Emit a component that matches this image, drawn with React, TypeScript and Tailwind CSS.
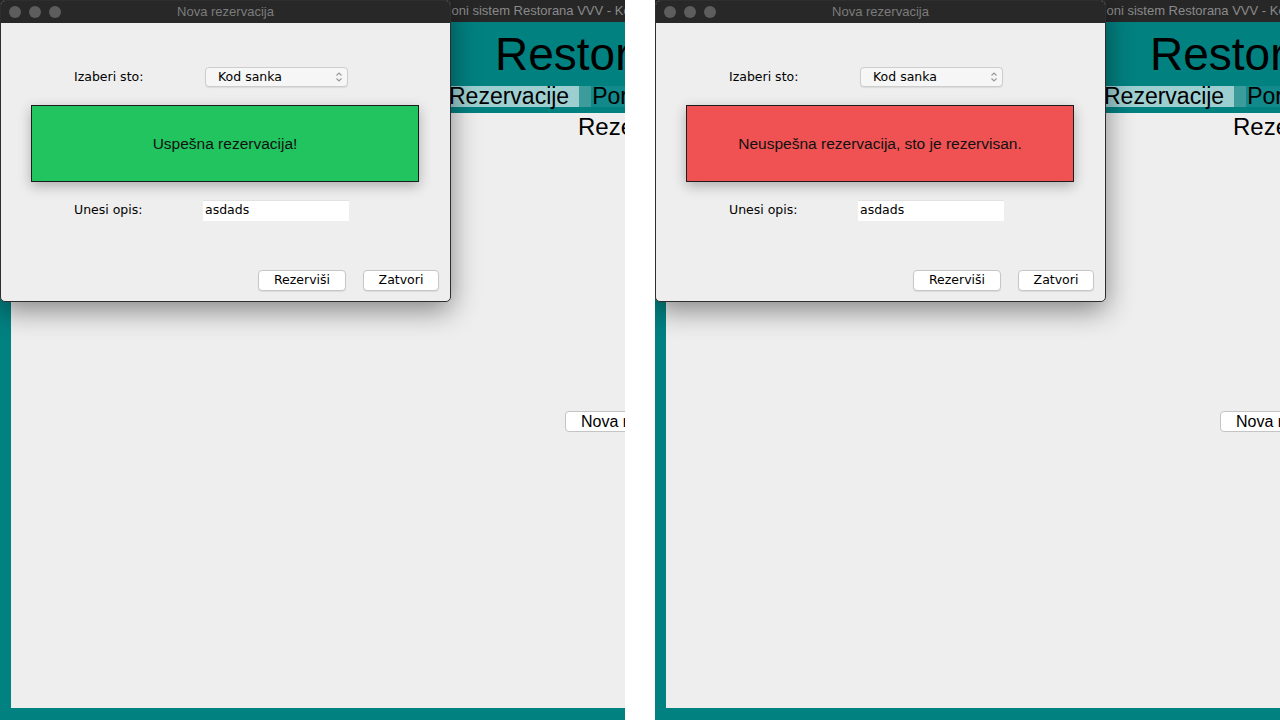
import React from "react";

const uiFont = { fontFamily: '"DejaVu Sans", "Liberation Sans", sans-serif' };
const msgFont = { fontFamily: '"Liberation Sans", Arial, sans-serif' };

function TrafficLights() {
  return (
    <div className="flex items-center gap-[8px] pl-[8px]">
      <span className="h-[12px] w-[12px] rounded-full bg-[#5d5d5d]" />
      <span className="h-[12px] w-[12px] rounded-full bg-[#5d5d5d]" />
      <span className="h-[12px] w-[12px] rounded-full bg-[#5d5d5d]" />
    </div>
  );
}

function Chevrons() {
  return (
    <svg width="8" height="12" viewBox="0 0 8 12" fill="none" stroke="#9a9a9a" strokeWidth="1.2">
      <path d="M1.5 4.5 L4 2 L6.5 4.5" />
      <path d="M1.5 7.5 L4 10 L6.5 7.5" />
    </svg>
  );
}

function MainWindow() {
  return (
    <div className="flex h-full w-[1000px] flex-col">
      <div
        className="flex h-[22px] items-center whitespace-nowrap bg-[#272727] pl-[398px] text-[13px] text-[#8a8a8a]"
        style={msgFont}
      >
        Informacioni sistem Restorana VVV - Kod
      </div>
      <div className="flex flex-1 flex-col bg-[#028181] pb-[12px] pl-[11px]">
        <div
          className="flex h-[64px] items-center whitespace-nowrap pl-[484px] text-[46px] leading-none text-black"
          style={msgFont}
        >
          Restoran
        </div>
        <div
          className="flex h-[21px] items-stretch whitespace-nowrap pl-[427px] text-[23px] leading-none text-black"
          style={msgFont}
        >
          <div className="flex items-center bg-[#9dcfd1] pl-[11px] pr-[10px]">Rezervacije</div>
          <div className="w-[12px] bg-[#3b9c9b]" />
          <div className="flex items-center bg-[#12898a] pl-[1px] pr-[11px]">Porudžbine</div>
        </div>
        <div className="h-[6px]" />
        <div className="flex flex-1 flex-col bg-[#eeeeee] pl-[554px]" style={msgFont}>
          <div className="whitespace-nowrap pl-[13px] text-[24px] leading-[28px] text-black">Rezervacije</div>
          <div className="mt-[270px]">
            <div className="flex h-[21px] w-[140px] items-center whitespace-nowrap rounded-[4px] border border-[#c4c4c4] bg-white pl-[15px] text-[16px] text-black">
              Nova rezervacija
            </div>
          </div>
        </div>
      </div>
    </div>
  );
}

function Dialog({ color, message }: { color: string; message: string }) {
  return (
    <div className="absolute left-0 top-0 flex h-[302px] w-[451px] flex-col overflow-hidden rounded-[5px] border border-[#2e2e2e] bg-[#eeeeee] shadow-[0_8px_28px_rgba(0,0,0,0.45)]">
      <div className="relative flex h-[22px] shrink-0 items-center bg-[#282828]">
        <TrafficLights />
        <div
          className="absolute inset-0 flex items-center justify-center text-[13px] text-[#7c7c7c]"
          style={msgFont}
        >
          Nova rezervacija
        </div>
      </div>
      <div className="flex flex-1 flex-col pt-[44px] text-[12.5px] text-black" style={uiFont}>
        <div className="flex items-center">
          <div className="w-[204px] pl-[73px]">Izaberi sto:</div>
          <div className="flex h-[20px] w-[143px] items-center justify-between rounded-[4px] border border-[#cdcdcd] bg-[#f6f6f6] pl-[12px] pr-[4px] shadow-[0_1px_1px_rgba(0,0,0,0.08)]">
            <span>Kod sanka</span>
            <Chevrons />
          </div>
        </div>
        <div
          className={`ml-[30px] mt-[18px] flex h-[77px] w-[388px] items-center justify-center border border-[#1c1c1c] text-[15.5px] text-[#111] shadow-[0_4px_12px_rgba(0,0,0,0.28)] ${color}`}
          style={msgFont}
        >
          {message}
        </div>
        <div className="mt-[18px] flex items-center">
          <div className="w-[202px] pl-[73px]">Unesi opis:</div>
          <div className="flex h-[21px] w-[146px] items-center bg-white pl-[2px] shadow-[inset_0_1px_0_#e2e2e2]">
            asdads
          </div>
        </div>
        <div className="mt-[49px] flex justify-end gap-[17px] pr-[11px]">
          <div className="flex h-[21px] w-[88px] items-center justify-center rounded-[4px] border border-[#c6c6c6] bg-white shadow-[0_1px_1px_rgba(0,0,0,0.08)]">
            Rezerviši
          </div>
          <div className="flex h-[21px] w-[76px] items-center justify-center rounded-[4px] border border-[#c6c6c6] bg-white shadow-[0_1px_1px_rgba(0,0,0,0.08)]">
            Zatvori
          </div>
        </div>
      </div>
    </div>
  );
}

function Panel({ color, message }: { color: string; message: string }) {
  return (
    <div className="relative h-[720px] w-[625px] shrink-0 overflow-hidden">
      <MainWindow />
      <Dialog color={color} message={message} />
    </div>
  );
}

export default function App() {
  return (
    <div className="flex h-[720px] w-[1280px] gap-[30px] bg-white">
      <Panel color="bg-[#21c45f]" message="Uspešna rezervacija!" />
      <Panel color="bg-[#f05253]" message="Neuspešna rezervacija, sto je rezervisan." />
    </div>
  );
}
